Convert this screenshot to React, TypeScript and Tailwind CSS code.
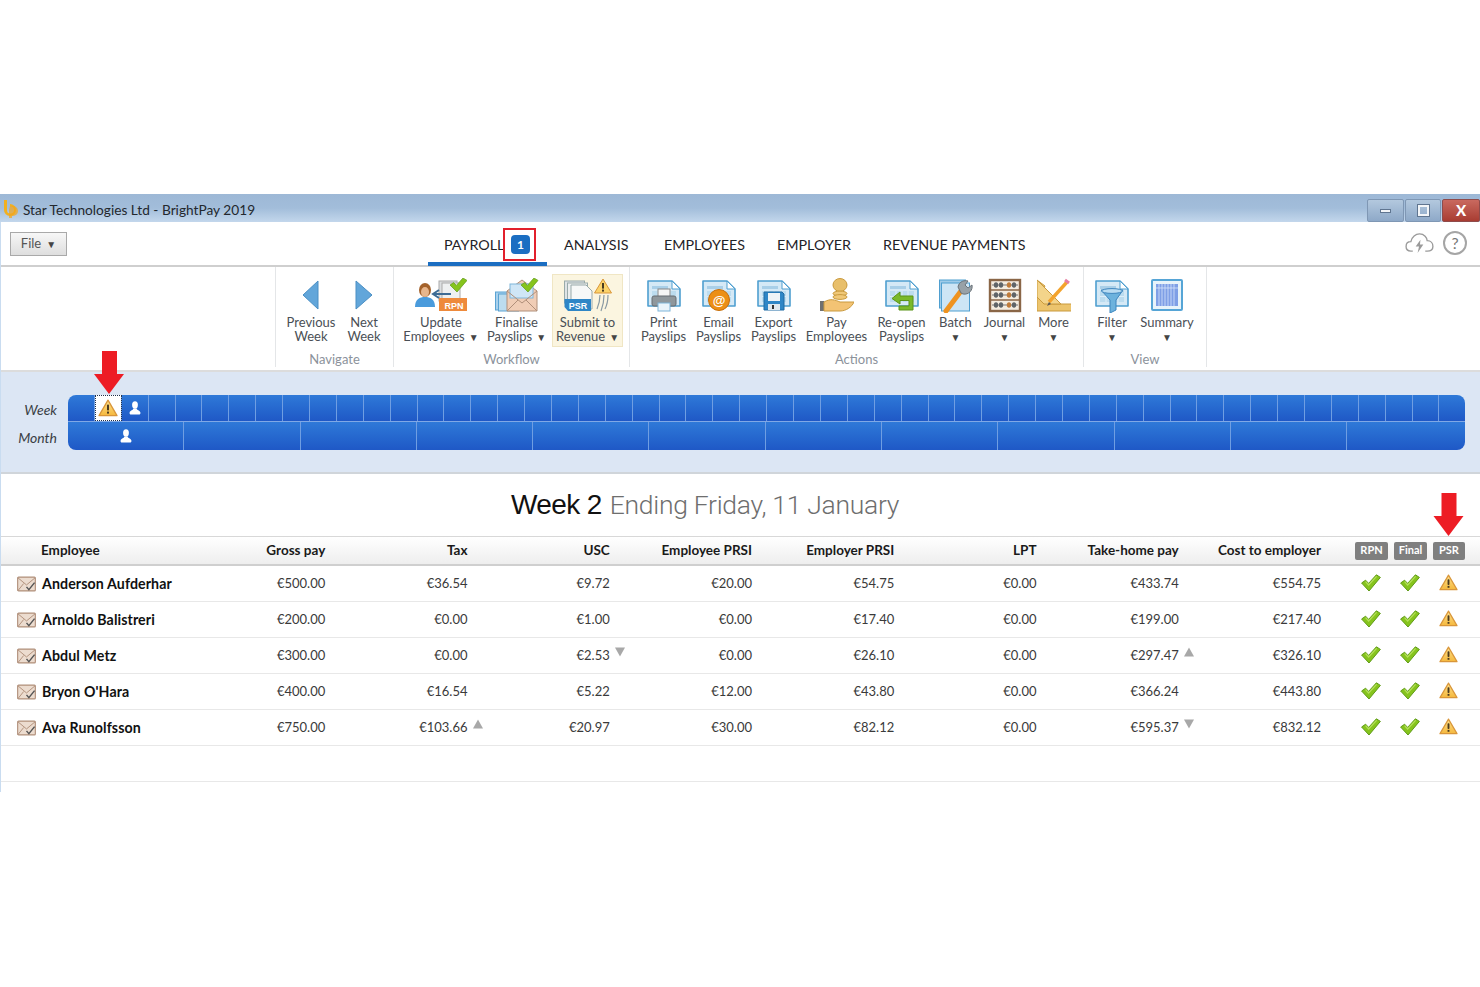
import { type ReactNode } from 'react';

const employees = [
  { name: 'Anderson Aufderhar', values: ['€500.00', '€36.54', '€9.72', '€20.00', '€54.75', '€0.00', '€433.74', '€554.75'], marks: {} as Record<number, 'up' | 'down'> },
  { name: 'Arnoldo Balistreri', values: ['€200.00', '€0.00', '€1.00', '€0.00', '€17.40', '€0.00', '€199.00', '€217.40'], marks: {} as Record<number, 'up' | 'down'> },
  { name: 'Abdul Metz', values: ['€300.00', '€0.00', '€2.53', '€0.00', '€26.10', '€0.00', '€297.47', '€326.10'], marks: { 2: 'down', 6: 'up' } as Record<number, 'up' | 'down'> },
  { name: "Bryon O'Hara", values: ['€400.00', '€16.54', '€5.22', '€12.00', '€43.80', '€0.00', '€366.24', '€443.80'], marks: {} as Record<number, 'up' | 'down'> },
  { name: 'Ava Runolfsson', values: ['€750.00', '€103.66', '€20.97', '€30.00', '€82.12', '€0.00', '€595.37', '€832.12'], marks: { 1: 'up', 6: 'down' } as Record<number, 'up' | 'down'> },
];

const headers = ['Gross pay', 'Tax', 'USC', 'Employee PRSI', 'Employer PRSI', 'LPT', 'Take-home pay', 'Cost to employer'];

// Small shared drawings
function Warning({ className }: { className: string }) {
  return (
    <svg viewBox="0 0 20 18" className={className}>
      <defs>
        <linearGradient id="warnFill" x1="0" y1="0" x2="0" y2="1">
          <stop offset="0" stopColor="#fde08a" />
          <stop offset="1" stopColor="#f5b83d" />
        </linearGradient>
      </defs>
      <path d="M10 1.2 L19 16.6 H1 Z" fill="url(#warnFill)" stroke="#d9963a" strokeWidth="1.3" strokeLinejoin="round" />
      <rect x="9" y="5.6" width="2" height="6" rx="0.8" fill="#4a3a20" />
      <rect x="9" y="12.6" width="2" height="2" fill="#4a3a20" />
    </svg>
  );
}

function Check({ className }: { className: string }) {
  return (
    <svg viewBox="0 0 20 18" className={className}>
      <path d="M0.6 9 L4.6 6.2 L7.6 9.4 L15.4 0.8 L19.4 3.4 L8 17 Z" fill="#86c41d" stroke="#5f9a18" strokeWidth="1" strokeLinejoin="round" />
      <path d="M4.6 7.6 L7.6 11 L15.6 2.4" fill="none" stroke="#b5e05a" strokeWidth="1.2" />
    </svg>
  );
}

function Person({ className }: { className: string }) {
  return (
    <svg viewBox="0 0 12 14" className={className}>
      <ellipse cx="6" cy="4" rx="2.9" ry="3.7" fill="#fff" />
      <path d="M4.4 7.6 C4.4 9.2 1 9.6 .6 11.6 C.4 13 1 13.6 2 13.6 H10 C11 13.6 11.6 13 11.4 11.6 C11 9.6 7.6 9.2 7.6 7.6 Z" fill="#fff" />
    </svg>
  );
}

function RedArrow({ className }: { className: string }) {
  return (
    <svg viewBox="0 0 30 43" className={className}>
      <path d="M8 0 H23 V23 H30 L15 43 L0 23 H8 Z" fill="#ed1c24" />
    </svg>
  );
}

function Envelope() {
  return (
    <svg viewBox="0 0 20 16" className="w-[19px] h-[16px] shrink-0">
      <rect x="0.7" y="0.7" width="18.6" height="14.6" rx="1" fill="#ecdccf" stroke="#b08f7a" strokeWidth="1.2" />
      <path d="M1 1.5 L10 9 L19 1.5 M1 15 L7 7.5" fill="none" stroke="#b08f7a" strokeWidth="1" />
      <path d="M10 11 L12.5 14 L18.5 6.5" fill="none" stroke="#555" strokeWidth="1.5" />
    </svg>
  );
}

// Blue payslip sheet most of the ribbon icons sit on
function Sheet() {
  return (
    <g>
      <path d="M1 3 H25 L33 11 V28 H1 Z" fill="#d5e9f6" stroke="#4f9fd0" strokeWidth="1.6" strokeLinejoin="round" />
      <path d="M25 3 V11 H33 Z" fill="#fff" stroke="#4f9fd0" strokeWidth="1" />
      <rect x="5" y="8" width="16" height="3" fill="#a9cfe8" />
      <rect x="5" y="13" width="24" height="11" fill="#bcdcef" />
      <path d="M11 13 V24 M17 13 V24 M23 13 V24 M5 18.5 H29" stroke="#e6f3fb" strokeWidth="0.8" />
    </g>
  );
}

function SmallCheck({ x, y }: { x: number; y: number }) {
  return (
    <path transform={`translate(${x} ${y})`} d="M0 7 L3.6 4.6 L6.4 7.4 L13 0 L17 2.4 L7 14 Z" fill="#86c41d" stroke="#5f9a18" strokeWidth="0.7" strokeLinejoin="round" />
  );
}

const iconBoxes: Record<string, { box: string; size: string }> = {
  update: { box: '0 0 52 35', size: 'w-[52px]' },
  finalise: { box: '0 0 44 35', size: 'w-[44px]' },
  submit: { box: '0 0 48 35', size: 'w-[48px]' },
};

const icons: Record<string, ReactNode> = {
  prev: <path d="M24 3 V31 L9 17 Z" fill="#62a6da" stroke="#4b8fc4" strokeWidth="1" strokeLinejoin="round" />,
  next: <path d="M9 3 V31 L25 17 Z" fill="#62a6da" stroke="#4b8fc4" strokeWidth="1" strokeLinejoin="round" />,
  update: (
    <g>
      <rect x="24" y="3" width="18" height="20" fill="#dcdfe1" stroke="#aaa" />
      <rect x="27" y="5" width="18" height="20" fill="#eef0f1" stroke="#aaa" />
      <rect x="24" y="20" width="28" height="13" fill="#ee8a3c" />
      <text x="39" y="30.5" textAnchor="middle" fontSize="9" fontWeight="700" fill="#fff" fontFamily="Liberation Sans, sans-serif">RPN</text>
      <path d="M36 16 H19 M24 12 L18 16 L24 20" stroke="#3d6b94" strokeWidth="2" fill="none" />
      <ellipse cx="10" cy="12" rx="6" ry="7" fill="#a4622b" />
      <ellipse cx="10" cy="14" rx="4" ry="5" fill="#e8b68c" />
      <path d="M0 29 C0 21 5 19 10 19 C15 19 20 21 20 29 Z" fill="#4a9bdc" />
      <SmallCheck x={35} y={0} />
    </g>
  ),
  finalise: (
    <g>
      <rect x="0.5" y="14" width="20" height="18" fill="#a8d0ec" stroke="#5aa3d3" />
      <rect x="3.5" y="16" width="20" height="17" fill="#bcdcef" stroke="#5aa3d3" />
      <path d="M12 13 L27 2 L42 13 V33 H12 Z" fill="#f0cdb6" stroke="#b08f7a" />
      <rect x="15" y="6" width="23" height="14" fill="#cfe6f6" stroke="#7eb6da" />
      <path d="M12 13 L27 25 L42 13 M12 33 L23 22 M42 33 L31 22" fill="none" stroke="#b08f7a" />
      <SmallCheck x={26} y={0} />
    </g>
  ),
  submit: (
    <g>
      <rect x="0.5" y="3" width="20" height="22" fill="#dfe3e6" stroke="#9aa" />
      <rect x="3.5" y="5" width="20" height="22" fill="#eceeef" stroke="#9aa" />
      <path d="M7 7 H22 L28 13 V31 H7 Z" fill="#f7f8f8" stroke="#9aa" />
      <path d="M0.5 21 H27 V33 H4 L0.5 29 Z" fill="#2f86c6" />
      <text x="14" y="31" textAnchor="middle" fontSize="9" fontWeight="700" fill="#fff" fontFamily="Liberation Sans, sans-serif">PSR</text>
      <path d="M39 1 L47.5 15 H30.5 Z" fill="#fbd36b" stroke="#d9963a" strokeLinejoin="round" />
      <rect x="38" y="5" width="2" height="5.6" fill="#4a3a20" />
      <rect x="38" y="11.6" width="2" height="2" fill="#4a3a20" />
      <path d="M36 17 C36 23 35 26 33 31 M40 17 C40 23 39 28 37 33 M44 17 C44 23 43 27 41 31" fill="none" stroke="#8a9aa3" strokeWidth="1.2" />
    </g>
  ),
  print: (
    <g>
      <Sheet />
      <rect x="11" y="11" width="12" height="8" fill="#f5f5f5" stroke="#888" />
      <rect x="5" y="18" width="24" height="10" rx="2" fill="#8f979c" stroke="#666d72" />
      <rect x="11" y="25" width="12" height="8" fill="#eaf4fb" stroke="#7eb6da" />
    </g>
  ),
  email: (
    <g>
      <Sheet />
      <circle cx="17" cy="22" r="10.5" fill="#ec8f16" stroke="#c66e0a" />
      <text x="17" y="26.5" textAnchor="middle" fontSize="13" fontWeight="700" fill="#fff" fontFamily="Liberation Sans, sans-serif">@</text>
    </g>
  ),
  export: (
    <g>
      <Sheet />
      <path d="M7 14 H25 L27 16 V32 H7 Z" fill="#2f86c6" stroke="#1f6aa3" />
      <rect x="11" y="15" width="12" height="8" fill="#eef3f6" />
      <rect x="11" y="26" width="12" height="6" fill="#dfe8ee" />
      <rect x="15" y="27" width="2" height="4" fill="#333" />
    </g>
  ),
  pay: (
    <g>
      <ellipse cx="20" cy="7" rx="7" ry="6.5" fill="#e8bf6b" stroke="#c99a3e" />
      <ellipse cx="20" cy="15.5" rx="7" ry="2.4" fill="#f0c878" stroke="#c99a3e" />
      <ellipse cx="20" cy="19" rx="7" ry="2.4" fill="#f0c878" stroke="#c99a3e" />
      <rect x="0" y="23" width="4" height="10" fill="#707070" />
      <path d="M4 24 C11 20 15 22 20 24 H34 C32 29 26 33 20 33 H4 Z" fill="#f3c374" stroke="#c99a3e" />
    </g>
  ),
  reopen: (
    <g>
      <Sheet />
      <path d="M28 18 H15 V14 L7 20.5 L15 26 V22.5 H24 V28 H14 V32 H28 Z" fill="#7ab92a" stroke="#5b9418" strokeLinejoin="round" />
    </g>
  ),
  batch: (
    <g>
      <rect x="0.5" y="2" width="26" height="28" fill="#9fcbe8" stroke="#4f9fd0" />
      <rect x="2.5" y="5" width="28" height="28" fill="#cde5f5" stroke="#4f9fd0" />
      <path d="M7 33 L22 13" stroke="#ef9320" strokeWidth="5" strokeLinecap="round" />
      <path d="M22 15 L19 9 C20 3 26 2 29 3 L26 7 L29 10 L33 7 C34 12 30 17 24 16 Z" fill="#98a1a7" stroke="#6b7379" />
    </g>
  ),
  journal: (
    <g>
      <rect x="2" y="2" width="30" height="31" fill="#f4ece0" stroke="#8a6647" strokeWidth="2.4" />
      <path d="M3 12 H31 M3 22 H31" stroke="#8a6647" strokeWidth="1.6" />
      {[7, 17, 27].map(y => (
        <g key={y}>
          <path d={`M4 ${y} H30`} stroke="#777" strokeWidth="1" />
          {[8, 13, 21, 26].map((x, i) => (
            <ellipse key={x} cx={x} cy={y} rx="2.2" ry="2.8" fill={i === 2 ? '#c07b3a' : '#5f6468'} />
          ))}
        </g>
      ))}
    </g>
  ),
  more: (
    <g>
      <path d="M0 2 V33 H35 V26 H12 L6 20 V12 L8 8 Z" fill="#ecc46d" stroke="#c99a3e" />
      <path d="M0 2 L24 26 H7 L0 19 Z" fill="#f3d48a" stroke="#c99a3e" />
      <path d="M12 24 L30 4" stroke="#f3a32c" strokeWidth="3.4" />
      <path d="M28 2 L32 5" stroke="#e77da0" strokeWidth="3" />
      <path d="M12 24 L10 28 L14 26" fill="#555" />
    </g>
  ),
  filter: (
    <g>
      <Sheet />
      <path d="M6 12 H28 L21 22 V32 L15 35 V22 Z" fill="#6cb2dd" stroke="#3f86be" strokeLinejoin="round" />
      <ellipse cx="17" cy="13" rx="10.5" ry="2.4" fill="#b9dcf2" stroke="#3f86be" />
    </g>
  ),
  summary: (
    <g>
      <rect x="2" y="2" width="30" height="30" rx="1" fill="#e8f3fa" stroke="#56a5d6" strokeWidth="2" />
      <rect x="6" y="6" width="22" height="22" fill="#7f9fe6" />
      <path d="M9 6 V28 M12 6 V28 M15 6 V28 M18 6 V28 M21 6 V28 M24 6 V28 M6 10 H28" stroke="#d8e4fb" strokeWidth="0.8" />
    </g>
  ),
};

function Caret({ className = '' }: { className?: string }) {
  return <span className={`inline-block text-[10px] leading-none text-[#444] ${className}`}>▼</span>;
}

function RibbonButton({ icon, lines, width, caret, active }: { icon: string; lines: string[]; width: string; caret?: 'inline' | 'below'; active?: boolean }) {
  const box = iconBoxes[icon] ?? { box: '0 0 34 35', size: 'w-[34px]' };
  return (
    <div className={`${width} h-[73px] shrink-0 flex flex-col items-center pt-[3px] border ${active ? 'bg-[#fbf5e0] border-[#f0e6c4]' : 'border-transparent'}`}>
      <svg viewBox={box.box} className={`${box.size} h-[35px] shrink-0`}>{icons[icon]}</svg>
      <div className="mt-[2px] text-center text-[13px] leading-[14px] text-[#4a4f55] whitespace-nowrap">
        <div>{lines[0]}</div>
        <div>
          {lines[1]}
          {caret === 'inline' && <Caret className="ml-[4px]" />}
          {caret === 'below' && <Caret />}
        </div>
      </div>
    </div>
  );
}

function RibbonGroup({ label, width, padding, children }: { label: string; width: string; padding: string; children: ReactNode }) {
  return (
    <div className={`${width} shrink-0 h-[100px] border-l border-[#e4e6e8] flex flex-col`}>
      <div className={`flex ${padding} pt-[7px]`}>{children}</div>
      <div className="text-center text-[13px] leading-[14px] text-[#8b929b] mt-[5px]">{label}</div>
    </div>
  );
}

function WindowButton({ children, className }: { children: ReactNode; className: string }) {
  return <div className={`h-[23px] flex items-center justify-center border border-[#7f97b4] rounded-[2px] ${className}`}>{children}</div>;
}

function Tab({ label, className = '' }: { label: string; className?: string }) {
  return <div className={`px-[17px] h-[43px] flex items-center text-[14.3px] text-[#1f2328] ${className}`}>{label}</div>;
}

function Mark({ dir }: { dir: 'up' | 'down' }) {
  return (
    <svg viewBox="0 0 10 10" className="absolute left-full top-[2px] ml-[5px] w-[10px] h-[10px]">
      <path d={dir === 'up' ? 'M5 0.5 L10 9.5 H0 Z' : 'M0 0.5 H10 L5 9.5 Z'} fill="#a8a8a8" />
    </svg>
  );
}

export default function App() {
  return (
    <div className="relative h-[987px] w-[1480px] overflow-hidden bg-white pt-[194px] font-['Lato','Open_Sans',sans-serif]">
      <div className="h-[598px] flex flex-col border-l border-[#c9dcf0]">
        {/* Title bar */}
        <div className="h-[28px] -ml-px flex items-start justify-between bg-gradient-to-b from-[#9db8d6] via-[#a2bdda] to-[#c3d7ec]">
          <div className="flex items-center h-[32px] pl-[3px]">
            <svg viewBox="0 0 16 18" className="w-[16px] h-[18px] -mt-[3px]">
              <path d="M1 0 H4 V10 A3.5 3.5 0 1 0 7 6.6 V4 A6 6 0 1 1 1 10 Z" fill="#f2b01e" />
              <path d="M7 6 H10 A5 5 0 0 1 15 11 A5 5 0 0 1 10 16 H9 V18 H6 V10 Z" fill="#f4a51a" opacity="0.7" />
            </svg>
            <span className="ml-[4px] text-[13.7px] text-[#23282e]">Star Technologies Ltd - BrightPay 2019</span>
          </div>
          <div className="flex gap-px pt-[5px]">
            <WindowButton className="w-[37px] bg-gradient-to-b from-[#b3c8de] to-[#8ea9c8]">
              <div className="w-[11px] h-[4px] bg-[#f2f5f8] border border-[#5f7590]" />
            </WindowButton>
            <WindowButton className="w-[36px] bg-gradient-to-b from-[#b3c8de] to-[#8ea9c8]">
              <div className="w-[11px] h-[11px] border-2 border-[#f2f5f8] outline outline-1 outline-[#5f7590]" />
            </WindowButton>
            <WindowButton className="w-[38px] bg-gradient-to-b from-[#c9695f] to-[#a83c32] border-[#8f4b4b] text-white font-black text-[15px]">
              X
            </WindowButton>
          </div>
        </div>

        {/* Tabs row */}
        <div className="h-[45px] shrink-0 relative flex border-b-2 border-[#cfcfcf]">
          <div className="w-[57px] ml-[9px] mt-[10px] h-[24px] shrink-0 flex items-center justify-center gap-[5px] border border-[#a9a9a9] bg-gradient-to-b from-[#f7f7f7] to-[#dedede] text-[13px] text-[#555]">
            File <Caret />
          </div>
          <div className="ml-[361px] flex h-[44px] items-start">
            <div className="relative w-[119px] h-[44px] border-b-4 border-[#1b6ec2] pl-[16px] pt-[13px] text-[14.3px] leading-[20px] text-[#1f2328]">
              PAYROLL
              <div className="absolute left-[83px] top-[13px] w-[19px] h-[19px] rounded-[4px] bg-[#1b6ec2] flex items-center justify-center text-[12px] font-bold leading-none text-white">1</div>
              <div className="absolute left-[75px] top-[6px] w-[33px] h-[33px] border-2 border-[#e2202c]" />
            </div>
            <Tab label="ANALYSIS" className="w-[100px] pt-[3px]" />
            <Tab label="EMPLOYEES" className="w-[113px] pt-[3px]" />
            <Tab label="EMPLOYER" className="w-[106px] pt-[3px]" />
            <Tab label="REVENUE PAYMENTS" className="pt-[3px]" />
          </div>
          <div className="ml-auto flex items-center gap-[9px] pr-[13px] pb-[1px]">
            <svg viewBox="0 0 30 24" className="w-[29px] h-[23px]">
              <path d="M8 20 H6 C2 20 1 17 1 15 C1 12 3 10 6 10 C7 5 11 2 15 2 C20 2 23 6 23 9 C27 9 29 12 29 15 C29 18 27 20 23 20 H21" fill="#fff" stroke="#9a9a9a" strokeWidth="1.4" />
              <path d="M16 8 L11 15 H14.5 L13 22 L19 13 H15.5 Z" fill="#9a9a9a" />
            </svg>
            <div className="w-[24px] h-[24px] rounded-full border-2 border-[#a5a5a5] flex items-center justify-center text-[16px] leading-none text-[#777]">?</div>
          </div>
        </div>

        {/* Ribbon */}
        <div className="h-[105px] shrink-0 flex pl-[274px] border-b-2 border-[#dcdcdc]">
          <RibbonGroup label="Navigate" width="w-[118px]" padding="pl-[7px]">
            <RibbonButton icon="prev" lines={['Previous', 'Week']} width="w-[56px]" />
            <RibbonButton icon="next" lines={['Next', 'Week']} width="w-[50px]" />
          </RibbonGroup>
          <RibbonGroup label="Workflow" width="w-[236px]" padding="pl-[7px]">
            <RibbonButton icon="update" lines={['Update', 'Employees']} width="w-[80px]" caret="inline" />
            <RibbonButton icon="finalise" lines={['Finalise', 'Payslips']} width="w-[71px]" caret="inline" />
            <RibbonButton icon="submit" lines={['Submit to', 'Revenue']} width="w-[71px]" caret="inline" active />
          </RibbonGroup>
          <RibbonGroup label="Actions" width="w-[454px]" padding="pl-[6px]">
            <RibbonButton icon="print" lines={['Print', 'Payslips']} width="w-[55px]" />
            <RibbonButton icon="email" lines={['Email', 'Payslips']} width="w-[55px]" />
            <RibbonButton icon="export" lines={['Export', 'Payslips']} width="w-[55px]" />
            <RibbonButton icon="pay" lines={['Pay', 'Employees']} width="w-[71px]" />
            <RibbonButton icon="reopen" lines={['Re-open', 'Payslips']} width="w-[59px]" />
            <RibbonButton icon="batch" lines={['Batch', '']} width="w-[49px]" caret="below" />
            <RibbonButton icon="journal" lines={['Journal', '']} width="w-[49px]" caret="below" />
            <RibbonButton icon="more" lines={['More', '']} width="w-[49px]" caret="below" />
          </RibbonGroup>
          <RibbonGroup label="View" width="w-[123px]" padding="pl-[3px]">
            <RibbonButton icon="filter" lines={['Filter', '']} width="w-[50px]" caret="below" />
            <RibbonButton icon="summary" lines={['Summary', '']} width="w-[60px]" caret="below" />
          </RibbonGroup>
          <div className="h-[100px] border-l border-[#e4e6e8]" />
        </div>

        {/* Week / month strip */}
        <div className="h-[102px] shrink-0 bg-[#dce6f4] border-b-2 border-[#d0d5da] pt-[23px] flex">
          <div className="w-[56px] shrink-0 pt-px text-right text-[14px] italic text-[#3a3f45] leading-[28px]">
            <div>Week</div>
            <div>Month</div>
          </div>
          <div className="ml-[11px] w-[1397px] h-[55px] rounded-[8px] overflow-hidden flex flex-col">
            <div className="h-[27px] flex border-b border-[#7fa8e6]">
              {Array.from({ length: 52 }, (_, i) => (
                <div key={i} className={`flex-1 flex items-center justify-center border-r border-[#6f9ee2] last:border-r-0 ${i === 1 ? 'bg-white outline-1 outline-dotted outline-[#20304a] -outline-offset-1' : 'bg-gradient-to-b from-[#2f79d8] to-[#1f58c6]'}`}>
                  {i === 1 && <Warning className="w-[20px] h-[18px]" />}
                  {i === 2 && <Person className="w-[12px] h-[14px]" />}
                </div>
              ))}
            </div>
            <div className="h-[28px] flex">
              {Array.from({ length: 12 }, (_, i) => (
                <div key={i} className="w-[116.3px] last:flex-1 flex items-center justify-center border-r border-[#6f9ee2] last:border-r-0 bg-gradient-to-b from-[#2f79d8] to-[#1f58c6]">
                  {i === 0 && <Person className="w-[12px] h-[14px]" />}
                </div>
              ))}
            </div>
          </div>
        </div>

        {/* Heading */}
        <div className="h-[62px] shrink-0 flex items-center pl-[510px] text-[28px]">
          <span className="text-[#111] font-['Liberation_Sans',sans-serif] tracking-[-0.6px]">Week 2</span>
          <span className="ml-[8px] text-[26.5px] tracking-[-0.3px] text-[#6e6e6e] font-light font-['Roboto',sans-serif]">Ending Friday, 11 January</span>
        </div>

        {/* Table */}
        <div className="h-[30px] shrink-0 grid grid-cols-[182px_repeat(8,142.25px)_1fr] items-center bg-gradient-to-b from-white to-[#eeeeee] border-t border-[#d8d8d8] border-b-2 border-b-[#cfcfcf] text-[13.5px] font-bold text-[#1a1a1a]">
          <div className="pl-[40px]">Employee</div>
          {headers.map(h => (
            <div key={h} className="text-right whitespace-nowrap">{h}</div>
          ))}
          <div className="flex pl-[34px] gap-[6px] text-[11px] text-white">
            <span className="w-[33px] h-[18px] rounded-[2px] bg-[#7f7f7f] flex items-center justify-center">RPN</span>
            <span className="w-[33px] h-[18px] rounded-[2px] bg-[#7f7f7f] flex items-center justify-center">Final</span>
            <span className="w-[32px] h-[18px] rounded-[2px] bg-[#7f7f7f] flex items-center justify-center">PSR</span>
          </div>
        </div>
        {employees.map(emp => (
          <div key={emp.name} className="h-[36px] shrink-0 grid grid-cols-[182px_repeat(8,142.25px)_1fr] items-center border-b border-[#e8e8e8] text-[13px] text-[#3a3a3a]">
            <div className="pl-[16px] pt-px flex items-center gap-[6px] text-[14.2px] tracking-[0.1px] font-bold text-[#111] whitespace-nowrap">
              <Envelope />
              {emp.name}
            </div>
            {emp.values.map((v, i) => (
              <div key={i} className="relative pt-px text-right">
                {v}
                {emp.marks[i] && <Mark dir={emp.marks[i]} />}
              </div>
            ))}
            <div className="flex pl-[40px] gap-[19px] items-center -mt-[2px]">
              <Check className="w-[20px] h-[18px]" />
              <Check className="w-[20px] h-[18px]" />
              <Warning className="w-[19px] h-[17px]" />
            </div>
          </div>
        ))}
        <div className="h-[36px] shrink-0 border-b border-[#e8e8e8]" />
      </div>

      {/* Annotation arrows */}
      <RedArrow className="absolute left-[94px] top-[351px] w-[30px] h-[43px]" />
      <RedArrow className="absolute left-[1433px] top-[493px] w-[31px] h-[43px]" />
    </div>
  );
}
